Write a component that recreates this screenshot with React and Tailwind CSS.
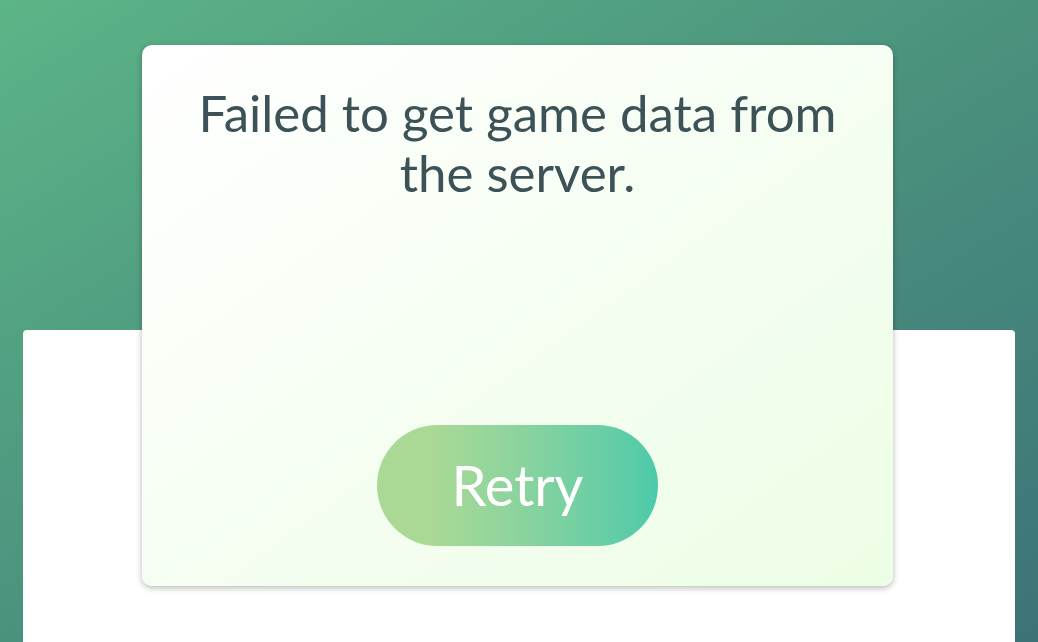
import React from "react";

export default function App() {
  return (
    <div
      className="relative h-[642px] w-full overflow-hidden bg-gradient-to-br from-[#5cb587] via-[#4b927e] to-[#3d7377] pt-[330px] px-[23px]"
      style={{ fontFamily: "Lato, 'Open Sans', sans-serif" }}
    >
      {/* page content behind the dialog */}
      <div className="h-full w-full rounded-t-[4px] bg-white" />

      {/* error dialog */}
      <div className="absolute left-[142px] top-[45px] flex h-[541px] w-[751px] flex-col items-center rounded-[10px] bg-gradient-to-br from-[#ffffff] to-[#ecfde5] shadow-[0_2px_6px_rgba(0,0,0,0.28)]">
        <p className="mt-[38px] px-[40px] text-center text-[51px] leading-[60px] text-[#3c5257]">
          Failed to get game data from the server.
        </p>
        <div className="flex-1" />
        <button className="mb-[40px] flex h-[121px] w-[281px] items-center justify-center rounded-full bg-gradient-to-r from-[#a9d995] from-20% to-[#4ccaa9] pb-[2px] text-[56px] text-white">
          Retry
        </button>
      </div>
    </div>
  );
}
